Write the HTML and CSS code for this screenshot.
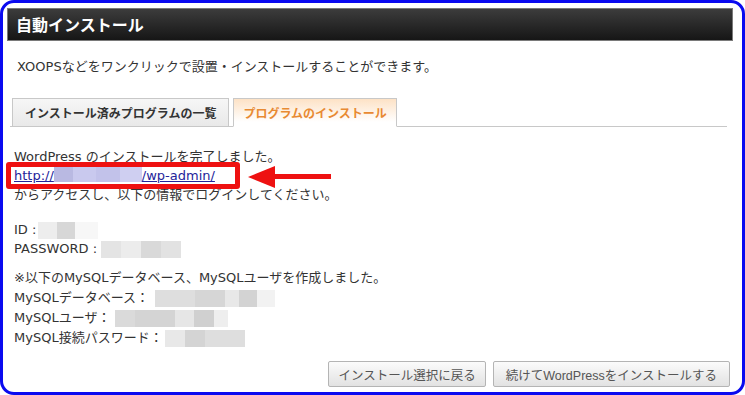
FILE: index.html
```html
<!DOCTYPE html>
<html lang="ja">

<head>
    <meta charset="UTF-8">
    <title>自動インストール</title>
    <link rel="stylesheet" href="styles.css">
</head>

<body>
    <div class="frame">
        <h1 class="title">自動インストール</h1>
        <p class="lead">XOOPSなどをワンクリックで設置・インストールすることができます。</p>

        <!-- タブ -->
        <div class="tabs">
            <div class="tab">インストール済みプログラムの一覧</div>
            <div class="tab active">プログラムのインストール</div>
        </div>

        <div class="result">
            <p class="block">
                WordPress のインストールを完了しました。<br>
                <span class="link-line">
                    <a href="#">http://<span class="blur blur-link"></span>/wp-admin/</a>
                    <span class="mark"></span>
                    <span class="arrow"></span>
                </span><br>
                からアクセスし、以下の情報でログインしてください。
            </p>
            <p class="block">
                ID :<span class="blur blur-id"></span><br>
                PASSWORD : <span class="blur blur-pw"></span>
            </p>
            <p class="block mysql">
                ※以下のMySQLデータベース、MySQLユーザを作成しました。<br>
                MySQLデータベース：<span class="blur blur-db"></span><br>
                MySQLユーザ：<span class="blur blur-user"></span><br>
                MySQL接続パスワード：<span class="blur blur-pass"></span>
            </p>
        </div>

        <div class="buttons">
            <button class="btn">インストール選択に戻る</button>
            <button class="btn wide">続けてWordPressをインストールする</button>
        </div>
    </div>
</body>

</html>
```

FILE: styles.css
```css
/*Reset*/
* {
    margin: 0;
    padding: 0;
    box-sizing: border-box;
}

body {
    background: #ffffff;
    font-family: "DejaVu Sans", "Noto Sans CJK JP", sans-serif;
    font-size: 13px;
    color: #333333;
}

/* 青い枠 */
.frame {
    width: 745px;
    height: 395px;
    border: 3px solid #0a0af0;
    border-radius: 14px;
    padding: 5px 9px 0 4px;
    display: flex;
    flex-direction: column;
    background: #ffffff;
}

/* 見出しバー */
.title {
    height: 33px;
    border: 1px solid #7a7a7a;
    background: linear-gradient(#3c3c3c, #161616);
    color: #ffffff;
    font-family: "Noto Sans CJK JP", sans-serif;
    font-size: 16px;
    font-weight: bold;
    line-height: 31px;
    padding-left: 8px;
}

.lead {
    margin: 16px 0 0 10px;
    line-height: 19px;
}

/* タブ */
.tabs {
    display: flex;
    gap: 4px;
    margin: 22px 6px 0 3px;
    padding-left: 2px;
    border-bottom: 1px solid #c8c8c8;
}

.tab {
    height: 29px;
    margin-bottom: -1px;
    padding: 0 12px;
    border: 1px solid #c8c8c8;
    background: linear-gradient(#f6f6f6, #e9e9e9);
    font-family: "Noto Sans CJK JP", sans-serif;
    font-size: 12px;
    font-weight: bold;
    line-height: 28px;
    color: #333333;
}

.tab.active {
    padding: 0 9px;
    background: linear-gradient(#fde2c6, #ffffff 85%);
    border-bottom-color: #ffffff;
    color: #e88a32;
}

/* 結果 */
.result {
    padding: 20px 0 0 7px;
}

.block {
    line-height: 19px;
}

.block + .block {
    margin-top: 16px;
}

.block.mysql {
    margin-top: 10px;
    line-height: 20px;
}

.link-line {
    position: relative;
}

.link-line a {
    color: #23239a;
}

/* 赤い囲みと矢印（注釈） */
.mark {
    position: absolute;
    left: -8px;
    top: -6px;
    width: 234px;
    height: 27px;
    border: 5px solid #ee1111;
    border-radius: 3px;
}

.arrow {
    position: absolute;
    left: 234px;
    top: 1px;
    width: 83px;
    height: 16px;
}

.arrow::before {
    content: "";
    position: absolute;
    left: 24px;
    top: 5px;
    width: 59px;
    height: 5px;
    background: #ee1111;
}

.arrow::after {
    content: "";
    position: absolute;
    left: 0;
    top: -3px;
    border-right: 27px solid #ee1111;
    border-top: 11px solid transparent;
    border-bottom: 11px solid transparent;
}

/* ぼかし */
.blur {
    display: inline-block;
    vertical-align: middle;
    height: 17px;
}

.blur-link {
    width: 88px;
    height: 15px;
    vertical-align: -2px;
    background: linear-gradient(90deg, #b9b9e2 0 22%, #c9c9ee 22% 48%, #c2c2ea 48% 75%, #cfcff1 75%);
}

.blur-id {
    margin-left: 2px;
    width: 60px;
    background: linear-gradient(90deg, #ededed 0 32%, #d7d7d7 32% 62%, #f7f7f7 62%);
}

.blur-pw {
    width: 80px;
    background: linear-gradient(90deg, #e4e4e4 0 25%, #ececec 25% 50%, #d9d9d9 50% 75%, #e2e2e2 75%);
}

.blur-db {
    margin-left: 6px;
    width: 120px;
    background: linear-gradient(90deg, #dedede 0 33%, #d6d6d6 33% 58%, #e8e8e8 58% 70%, #d3d3d3 70% 85%, #f2f2f2 85%);
}

.blur-user {
    margin-left: 5px;
    width: 113px;
    background: linear-gradient(90deg, #dadada 0 18%, #d4d4d4 18% 53%, #e6e6e6 53% 70%, #d0d0d0 70% 88%, #eeeeee 88%);
}

.blur-pass {
    margin-left: 2px;
    width: 80px;
    background: linear-gradient(90deg, #e8e8e8 0 25%, #d4d4d4 25% 50%, #dedede 50%);
}

/* ボタン */
.buttons {
    display: flex;
    justify-content: flex-end;
    gap: 7px;
    margin: auto 3px 5px 0;
}

.btn {
    height: 26px;
    padding: 0 9px;
    border: 1px solid #b4b4b4;
    border-radius: 2px;
    background: linear-gradient(#fbfbfb, #e2e2e2);
    font-family: "Liberation Sans", "Noto Sans CJK JP", sans-serif;
    font-size: 12.5px;
    color: #555555;
}

.btn.wide {
    padding: 0 12px;
}
```
